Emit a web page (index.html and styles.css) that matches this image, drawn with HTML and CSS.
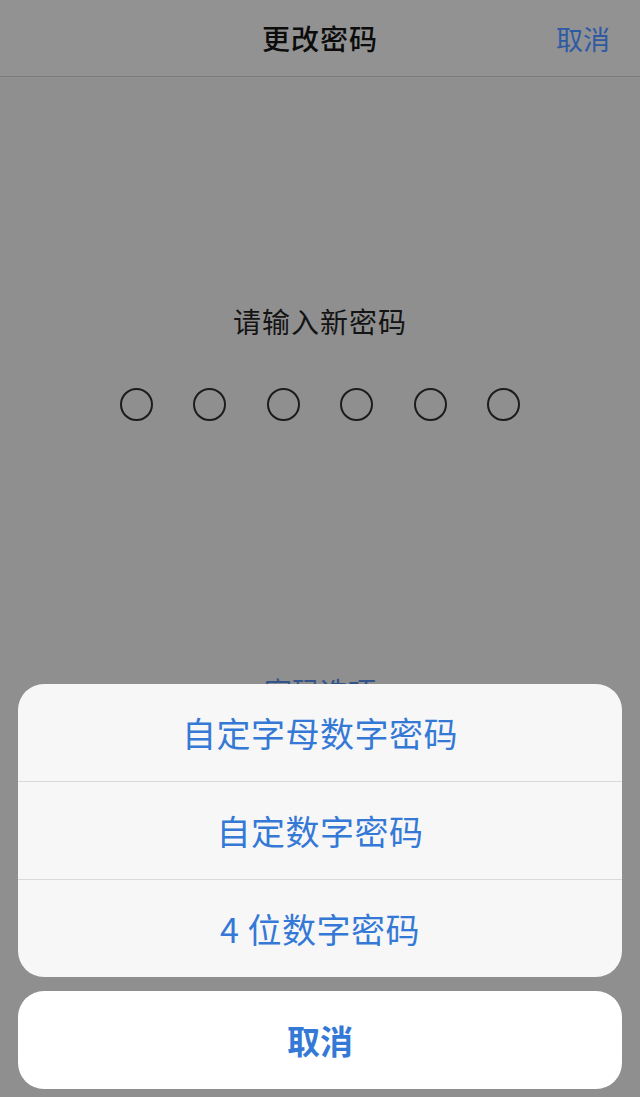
FILE: index.html
```html
<!DOCTYPE html>
<html lang="zh-CN">
<head>
<meta charset="utf-8">
<title>更改密码</title>
<link rel="stylesheet" href="styles.css">
</head>
<body>
<div class="screen">
  <header class="navbar">
    <div class="nav-side"></div>
    <div class="nav-title">更改密码</div>
    <div class="nav-side nav-action">取消</div>
  </header>
  <main class="content">
    <div class="prompt">请输入新密码</div>
    <div class="dots">
      <span class="dot"></span><span class="dot"></span><span class="dot"></span>
      <span class="dot"></span><span class="dot"></span><span class="dot"></span>
    </div>
    <div class="options-link">密码选项</div>
  </main>
  <div class="sheet">
    <div class="sheet-group">
      <div class="sheet-row">自定字母数字密码</div>
      <div class="sheet-row">自定数字密码</div>
      <div class="sheet-row">4 位数字密码</div>
    </div>
    <div class="sheet-cancel">取消</div>
  </div>
</div>
</body>
</html>
```
FILE: styles.css
```css
html, body {
  margin: 0;
  padding: 0;
}
body {
  background: #8f8f8f;
  font-family: "Noto Sans CJK SC", "Noto Sans", sans-serif;
}
.screen {
  position: relative;
  width: 640px;
  height: 1097px;
  overflow: hidden;
  background: #8f8f8f;
}
.navbar {
  height: 77px;
  display: flex;
  align-items: center;
  justify-content: space-between;
  padding: 0 30px 0 30px;
  box-sizing: border-box;
  background: #929292;
  border-bottom: 1px solid #7b7b7b;
}
.nav-side {
  width: 80px;
}
.nav-title {
  font-size: 28px;
  font-weight: 500;
  color: #0c0c0c;
  letter-spacing: 1px;
}
.nav-action {
  text-align: right;
  font-size: 27px;
  color: #2e5aa4;
}
.content {
  display: flex;
  flex-direction: column;
  align-items: center;
  padding-top: 224px;
}
.prompt {
  font-size: 28px;
  line-height: 40px;
  color: #141414;
  letter-spacing: 1px;
}
.dots {
  display: flex;
  gap: 40.6px;
  margin-top: 47px;
}
.dot {
  width: 33px;
  height: 33px;
  box-sizing: border-box;
  border: 2px solid #1c1c1c;
  border-radius: 50%;
}
.options-link {
  margin-top: 250px;
  font-size: 28px;
  line-height: 40px;
  color: #33548a;
}
.sheet {
  position: absolute;
  left: 18px;
  right: 18px;
  top: 684px;
  display: flex;
  flex-direction: column;
  gap: 14px;
}
.sheet-group {
  background: #f7f7f8;
  border-radius: 26px;
  overflow: hidden;
}
.sheet-row {
  height: 97px;
  display: flex;
  align-items: center;
  justify-content: center;
  font-size: 34px;
  color: #3579d6;
  letter-spacing: 0.5px;
}
.sheet-row + .sheet-row {
  border-top: 1px solid #dadadc;
}
.sheet-cancel {
  height: 98px;
  background: #ffffff;
  border-radius: 26px;
  display: flex;
  align-items: center;
  justify-content: center;
  font-size: 33px;
  font-weight: 700;
  color: #3579d6;
}
```
